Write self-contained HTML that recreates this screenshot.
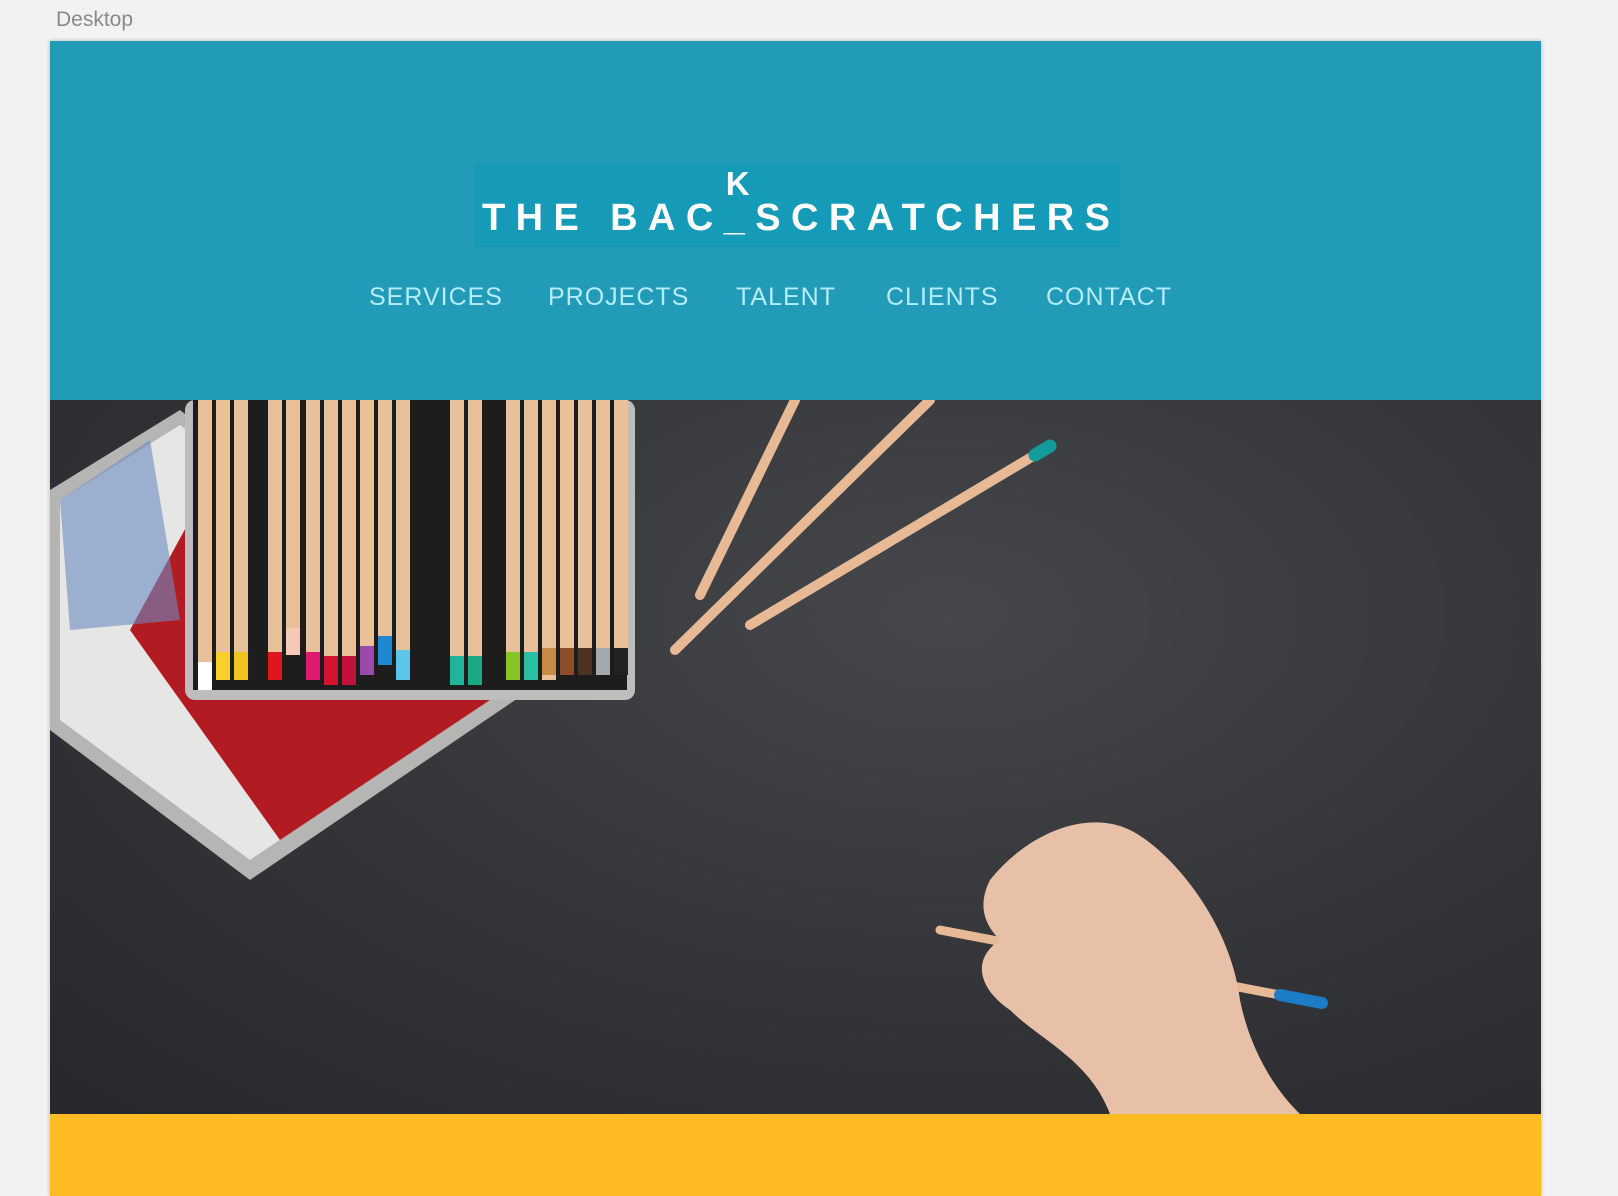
<!DOCTYPE html>
<html><head><meta charset="utf-8"><style>
html,body{margin:0;padding:0;width:1618px;height:1196px;overflow:hidden;background:#f2f2f2;font-family:"Liberation Sans",sans-serif}
.lbl{position:absolute;left:56px;top:8px;font-size:21px;color:#8a8a8a}
.frame{position:absolute;left:50px;top:41px;width:1491px;height:1155px;box-shadow:0 0 4px rgba(0,0,0,.25);overflow:hidden}
.hdr{position:absolute;left:0;top:0;width:100%;height:359px;background:#229bb8}
.logo{position:absolute;left:424px;top:124px;width:646px;height:82px;background:#159ab8}
.lt{position:absolute;left:8px;top:32px;font-size:38px;font-weight:bold;color:#fff;letter-spacing:10.4px;white-space:nowrap}
.u{position:relative;display:inline-block}
.k{position:absolute;left:2px;top:-32px;font-size:33px;font-weight:bold;color:#fff;letter-spacing:0}
.nav{position:absolute;top:242px;font-size:25px;color:#b6ecf7;letter-spacing:1px;white-space:nowrap}
.photo{position:absolute;left:0;top:359px;width:100%;height:714px;background:radial-gradient(ellipse at 60% 30%,#45474b 0%,#333438 55%,#27282b 100%)}
.yel{position:absolute;left:0;top:1073px;width:100%;height:90px;background:#ffbb22}
</style></head><body>
<div class="lbl">Desktop</div>
<div class="frame">
<div class="hdr">
 <div class="logo"><div class="lt">THE BAC<span class="u">_<span class="k">K</span></span>SCRATCHERS</div></div>
 <div class="nav" style="left:319px">SERVICES</div>
 <div class="nav" style="left:498px">PROJECTS</div>
 <div class="nav" style="left:686px">TALENT</div>
 <div class="nav" style="left:836px">CLIENTS</div>
 <div class="nav" style="left:996px">CONTACT</div>
</div>
<div class="photo">
<svg width="1491" height="714" viewBox="0 0 1491 714">
 <polygon points="0,90 130,10 480,290 200,480 0,330" fill="#b5b6b4"/>
 <polygon points="10,100 130,25 460,285 200,460 10,320" fill="#e6e6e4"/>
 <polygon points="80,230 140,120 440,300 230,440" fill="#b21b22"/>
 <polygon points="10,100 100,40 130,220 20,230" fill="#6d8bc2" opacity=".6"/>
 <rect x="135" y="0" width="450" height="300" rx="10" fill="#bdbdbb"/>
 <rect x="143" y="0" width="434" height="290" fill="#1d1d1e"/>
 <g fill="#e8c09a">
  <rect x="148" y="0" width="14" height="290"/><rect x="166" y="0" width="14" height="280"/><rect x="184" y="0" width="14" height="280"/>
  <rect x="218" y="0" width="14" height="280"/><rect x="236" y="0" width="14" height="255"/><rect x="256" y="0" width="14" height="280"/><rect x="274" y="0" width="14" height="285"/><rect x="292" y="0" width="14" height="285"/><rect x="310" y="0" width="14" height="275"/><rect x="328" y="0" width="14" height="265"/><rect x="346" y="0" width="14" height="280"/>
  <rect x="400" y="0" width="14" height="285"/><rect x="418" y="0" width="14" height="285"/><rect x="456" y="0" width="14" height="280"/><rect x="474" y="0" width="14" height="280"/><rect x="492" y="0" width="14" height="280"/><rect x="510" y="0" width="14" height="275"/><rect x="528" y="0" width="14" height="275"/><rect x="546" y="0" width="14" height="275"/><rect x="564" y="0" width="14" height="275"/>
 </g>
 <g>
  <rect x="148" y="262" width="14" height="28" fill="#fff"/><rect x="166" y="252" width="14" height="28" fill="#f7d02a"/><rect x="184" y="252" width="14" height="28" fill="#f2c21c"/>
  <rect x="218" y="252" width="14" height="28" fill="#e0161e"/><rect x="236" y="228" width="14" height="27" fill="#f6c9b7"/><rect x="256" y="252" width="14" height="28" fill="#e0186e"/><rect x="274" y="256" width="14" height="29" fill="#d5132f"/><rect x="292" y="256" width="14" height="29" fill="#c4113a"/><rect x="310" y="246" width="14" height="29" fill="#9a4aa8"/><rect x="328" y="236" width="14" height="29" fill="#1e88d0"/><rect x="346" y="250" width="14" height="30" fill="#5dc6e8"/>
  <rect x="400" y="256" width="14" height="29" fill="#1fb59c"/><rect x="418" y="256" width="14" height="29" fill="#19a985"/><rect x="456" y="252" width="14" height="28" fill="#86c427"/><rect x="474" y="252" width="14" height="28" fill="#27c0a0"/><rect x="492" y="248" width="14" height="27" fill="#c88b45"/><rect x="510" y="248" width="14" height="27" fill="#8b4d2a"/><rect x="528" y="248" width="14" height="27" fill="#4d3220"/><rect x="546" y="248" width="14" height="27" fill="#a5a9ab"/><rect x="564" y="248" width="14" height="27" fill="#222"/>
 </g>
 <g stroke-linecap="round">
  <line x1="650" y1="195" x2="745" y2="0" stroke="#e7b995" stroke-width="10"/>
  <line x1="625" y1="250" x2="880" y2="0" stroke="#e7b995" stroke-width="10"/>
  <line x1="700" y1="225" x2="985" y2="55" stroke="#e7b995" stroke-width="10"/>
  <line x1="985" y1="55" x2="1000" y2="46" stroke="#139a9a" stroke-width="13"/>
  <line x1="890" y1="530" x2="1230" y2="595" stroke="#e7b995" stroke-width="9"/>
  <line x1="1230" y1="595" x2="1272" y2="603" stroke="#1b7cc8" stroke-width="12"/>
 </g>
 <path d="M940,480 C980,430 1040,410 1080,430 C1120,450 1180,520 1190,600 C1200,650 1225,690 1250,714 L1060,714 C1040,660 990,640 960,610 C930,590 920,560 950,540 C930,520 930,500 940,480Z" fill="#e8c0a8"/>
</svg>
</div>
<div class="yel"></div>
</div>
</body></html>
